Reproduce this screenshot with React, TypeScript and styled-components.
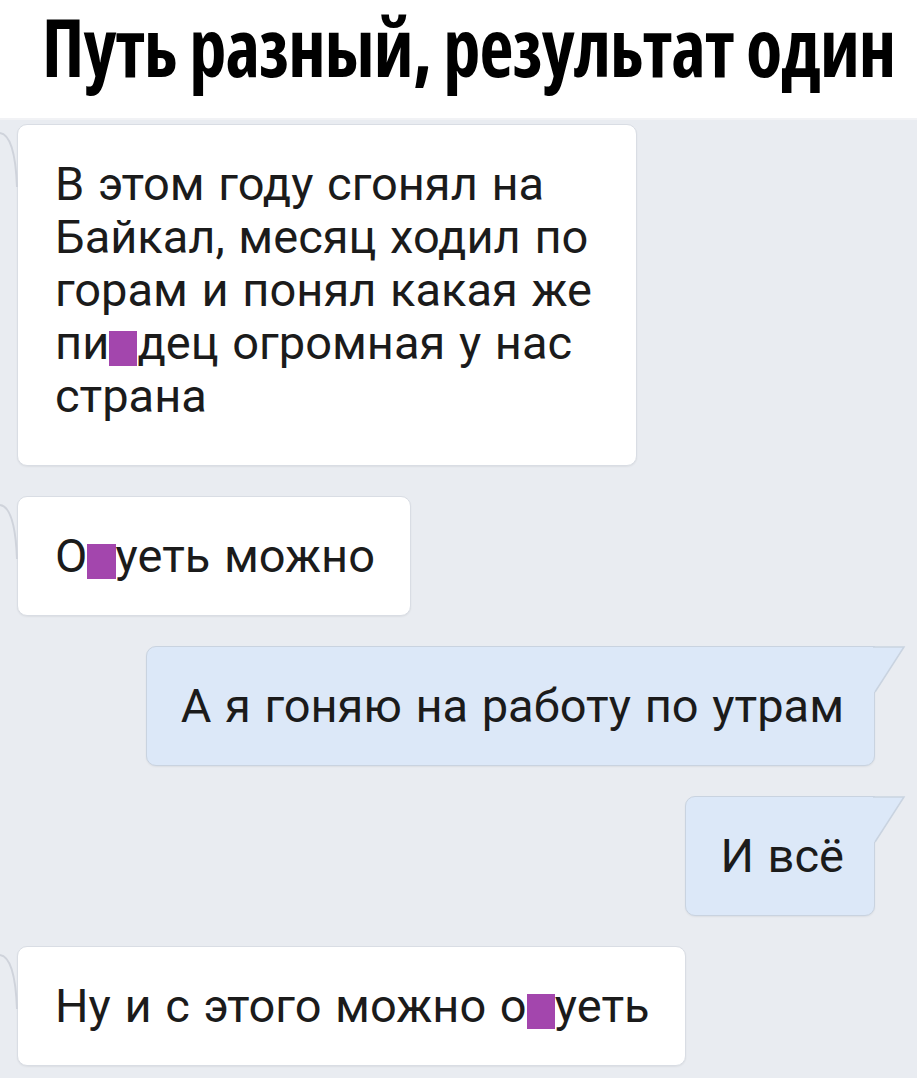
import React, { useLayoutEffect, useRef, useState } from "react";
import styled, { createGlobalStyle } from "styled-components";

const GlobalStyle = createGlobalStyle`
  html, body {
    margin: 0;
    padding: 0;
    background: #ffffff;
  }
  body {
    width: 917px;
    height: 1080px;
    overflow: hidden;
  }
`;

const TITLE_WIDTH = 853;

const Page = styled.div`
  display: flex;
  flex-direction: column;
  width: 917px;
  height: 1080px;
  background: #ffffff;
`;

const Header = styled.header`
  display: flex;
  align-items: flex-start;
  justify-content: center;
  height: 118px;
  flex: 0 0 118px;
  padding-left: 20px;
  box-sizing: border-box;
`;

const Title = styled.h1`
  display: inline-block;
  margin: 4px 0 0;
  font-family: "Open Sans", "Liberation Sans", sans-serif;
  font-weight: 700;
  font-stretch: 75%;
  font-size: 81px;
  line-height: 84px;
  letter-spacing: -1px;
  color: #000000;
  white-space: nowrap;
  transform-origin: center top;
`;

const Chat = styled.main`
  display: flex;
  flex-direction: column;
  gap: 30px;
  padding: 4px 0 12px;
  background: #e9ecf1;
  border-top: 2px solid #f1f2f5;
`;

const Row = styled.div<{ $out?: boolean }>`
  display: flex;
  justify-content: ${(p) => (p.$out ? "flex-end" : "flex-start")};
  padding: ${(p) => (p.$out ? "0 42px 0 0" : "0 0 0 17px")};
`;

const Bubble = styled.div<{ $out?: boolean; $width?: number; $tall?: boolean }>`
  position: relative;
  box-sizing: border-box;
  ${(p) => (p.$width ? `width: ${p.$width}px;` : "")}
  padding: 32px ${(p) => (p.$out ? "30px" : "35px")} ${(p) => (p.$tall ? "43px" : "33px")}
    ${(p) => (p.$out ? "34px" : "37px")};
  background: ${(p) => (p.$out ? "#dce8f8" : "#ffffff")};
  border: 1px solid ${(p) => (p.$out ? "#c9d3e0" : "#d9dde4")};
  border-radius: ${(p) => (p.$out ? "10px 0 10px 10px" : "10px")};
  box-shadow: 0 1px 2px rgba(0, 0, 0, 0.06);
  font-family: Roboto, "Noto Sans", sans-serif;
  font-size: 47px;
  line-height: 53px;
  word-spacing: 2px;
  color: #1b1b1b;
  white-space: nowrap;
`;

const InTail = styled.svg`
  position: absolute;
  left: -18px;
  top: 6px;
`;

const OutTail = styled.svg`
  position: absolute;
  right: -32px;
  top: -1px;
`;

const Censor = styled.span`
  display: inline-block;
  width: 0.6em;
  height: 0.74em;
  vertical-align: -0.14em;
  background: #a346ad;
`;

function Incoming({ width, tall, children }: { width?: number; tall?: boolean; children: React.ReactNode }) {
  return (
    <Row>
      <Bubble $width={width} $tall={tall}>
        <InTail width="18" height="56" viewBox="0 0 18 56">
          <path d="M0 2 Q15 4 17 56" fill="none" stroke="#cfd3db" strokeWidth="2" />
        </InTail>
        {children}
      </Bubble>
    </Row>
  );
}

function Outgoing({ children }: { children: React.ReactNode }) {
  return (
    <Row $out>
      <Bubble $out>
        {children}
        <OutTail width="33" height="48" viewBox="0 0 33 48">
          <path d="M0 1 L31 1 L2 46 L0 46 Z" fill="#dce8f8" />
          <path d="M0 1 L31 1 L2 46" fill="none" stroke="#c9d3e0" strokeWidth="1.5" />
        </OutTail>
      </Bubble>
    </Row>
  );
}

function FitTitle({ children }: { children: React.ReactNode }) {
  const ref = useRef<HTMLHeadingElement>(null);
  const [scale, setScale] = useState(1);
  useLayoutEffect(() => {
    if (ref.current) setScale(TITLE_WIDTH / ref.current.offsetWidth);
  }, []);
  return (
    <Title ref={ref} style={{ transform: `scaleX(${scale})` }}>
      {children}
    </Title>
  );
}

export default function App() {
  return (
    <Page>
      <GlobalStyle />
      <Header>
        <FitTitle>Путь разный, результат один</FitTitle>
      </Header>
      <Chat>
        <Incoming width={620} tall>
          В этом году сгонял на
          <br />
          Байкал, месяц ходил по
          <br />
          горам и понял какая же
          <br />
          пи<Censor />дец огромная у нас
          <br />
          страна
        </Incoming>
        <Incoming>
          О<Censor />уеть можно
        </Incoming>
        <Outgoing>А я гоняю на работу по утрам</Outgoing>
        <Outgoing>И всё</Outgoing>
        <Incoming>
          Ну и с этого можно о<Censor />уеть
        </Incoming>
      </Chat>
    </Page>
  );
}
